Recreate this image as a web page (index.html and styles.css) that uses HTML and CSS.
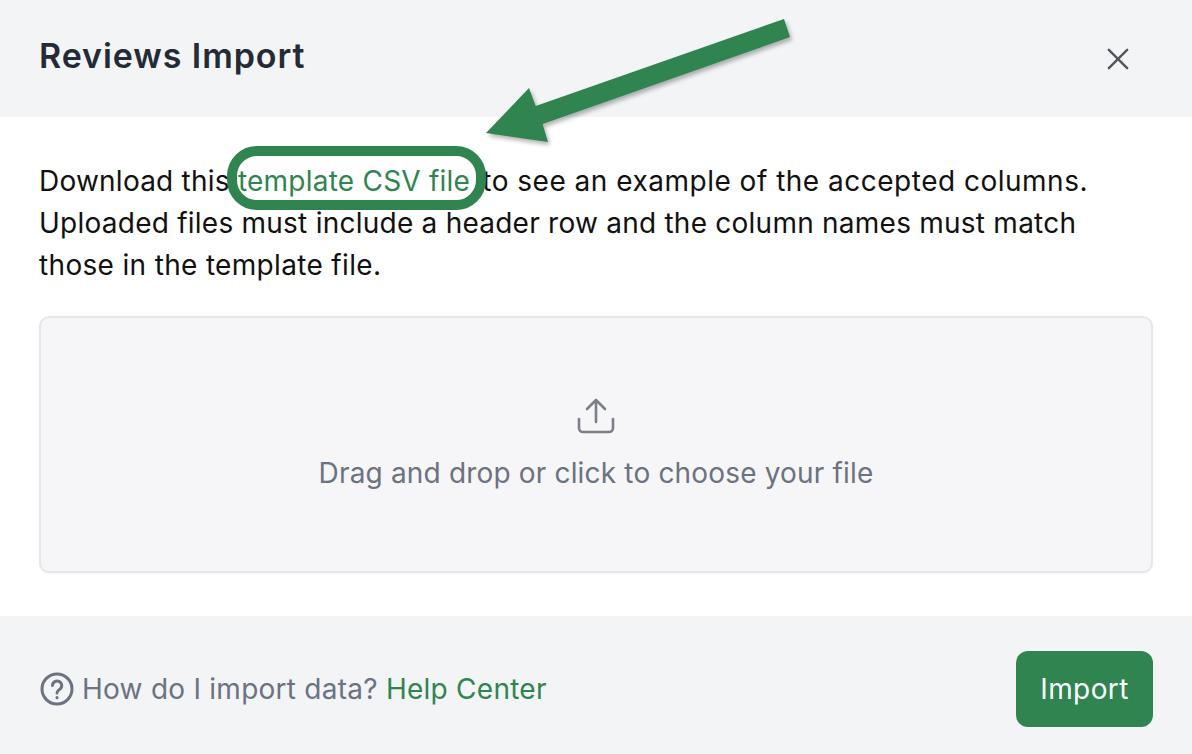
FILE: index.html
```html
<!DOCTYPE html>
<html lang="en">
<head>
<meta charset="utf-8">
<title>Reviews Import</title>
<link rel="stylesheet" href="styles.css">
</head>
<body>
<div class="modal">
  <header class="head">
    <h1 class="title">Reviews Import</h1>
    <svg class="close" viewBox="0 0 24 24" width="24" height="24" fill="none" stroke="#52555c" stroke-width="2.6" stroke-linecap="round"><path d="M2 2 22 22M22 2 2 22"/></svg>
  </header>
  <main class="body">
    <p class="intro">
      <span class="line line-a">Download this <a class="link" href="#">template CSV file</a> <span class="after">to see an example of the accepted columns.</span></span>
      <span class="line line-b">Uploaded files must include a header row and the column names must match</span>
      <span class="line line-c">those in the template file.</span>
    </p>
    <div class="drop">
      <svg class="upload" viewBox="0 0 38 38" width="38" height="38" fill="none" stroke="#7c7f88" stroke-width="2.6" stroke-linecap="round" stroke-linejoin="round"><path d="M19 25V3M10 12 19 3 28 12M2 22V31a4 4 0 0 0 4 4H32a4 4 0 0 0 4-4V22"/></svg>
      <div class="drop-text">Drag and drop or click to choose your file</div>
    </div>
  </main>
  <footer class="foot">
    <div class="help">
      <svg class="q" viewBox="0 0 34 34" width="34" height="34" fill="none" stroke="#6b7280" stroke-width="3" stroke-linecap="round"><circle cx="17" cy="17" r="15"/><path d="M12.5 13.5a4.600 4.600 0 1 1 7 4c-1.700 1-2.500 1.800-2.500 3.500"/><path d="M17 25.500v.2"/></svg>
      <span class="help-text">How do I import data? <a class="link" href="#">Help Center</a></span>
    </div>
    <button class="btn" type="button">Import</button>
  </footer>
  <div class="pill"></div>
  <svg class="arrow" viewBox="0 0 1192 200" width="1192" height="200"><polygon points="784,19 790,37 542.6,124 548,142 486,133 529,88 535.7,106" fill="#2f844f"/></svg>
</div>
</body>
</html>
```
FILE: styles.css
```css
* { box-sizing: border-box; }
html, body { margin: 0; padding: 0; }
body { background: #fff; font-family: Inter, "Liberation Sans", sans-serif; color: #111; overflow: hidden; }
.modal { position: relative; width: 1192px; height: 754px; display: flex; flex-direction: column; }
.head { height: 117px; background: #f3f4f6; display: flex; align-items: center; justify-content: space-between; padding: 0 40px 6px 39px; }
.title { margin: 0; font-size: 34px; line-height: 40px; font-weight: 600; letter-spacing: .92px; color: #252b36; }
.close { margin-right: 23px; margin-top: 6px; width: 22px; height: 22px; }
.body { flex: 1; padding: 43px 39px 43px; display: flex; flex-direction: column; }
.intro { margin: 0 0 30px; font-size: 28px; line-height: 42px; color: #111; }
.line { display: block; white-space: nowrap; }
.line-a { letter-spacing: .23px; }
.after { letter-spacing: .5px; margin-left: 4px; }
.line-b { letter-spacing: .24px; }
.line-c { letter-spacing: .33px; }
.link { color: #2f844f; text-decoration: none; }
.drop { flex: 1; background: #f6f6f9; border: 2px solid #e5e7eb; border-radius: 10px; box-shadow: 0 1px 2px rgba(0,0,0,.05); display: flex; flex-direction: column; align-items: center; padding-top: 79px; }
.upload { display: block; }
.drop-text { margin-top: 20px; font-size: 28px; line-height: 36px; letter-spacing: .17px; color: #6b7280; }
.foot { height: 138px; background: #f3f4f6; display: flex; align-items: center; justify-content: space-between; padding: 8px 39px 0 40px; }
.help { display: flex; align-items: center; gap: 8px; font-size: 28px; line-height: 40px; letter-spacing: .25px; color: #6b7280; }
.btn { width: 137px; height: 76px; border: 0; border-radius: 12px; background: #2f844f; color: #fff; font: 400 28px Inter, "Liberation Sans", sans-serif; letter-spacing: .4px; }
.pill { position: absolute; left: 227px; top: 146px; width: 259px; height: 64px; border: 10px solid #2f844f; border-radius: 30px; }
.arrow { position: absolute; left: 0; top: 0; filter: drop-shadow(2px 3px 2px rgba(0,0,0,.3)); pointer-events: none; }
```
